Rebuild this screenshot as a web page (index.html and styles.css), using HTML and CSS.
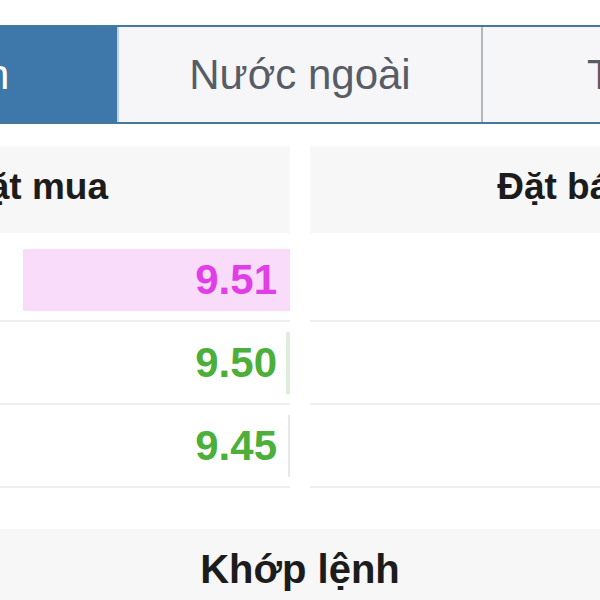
FILE: index.html
```html
<!DOCTYPE html>
<html lang="vi">
<head>
<meta charset="utf-8">
<title>Sổ lệnh</title>
<link rel="stylesheet" href="styles.css">
</head>
<body>
<div class="page">
  <nav class="tabs">
    <div class="tab active">Cá nhân</div>
    <div class="tab">Nước ngoài</div>
    <div class="tab">Tổ chức</div>
  </nav>
  <section class="book">
    <div class="col">
      <div class="head">Đặt mua</div>
      <div class="row"><div class="cell up-max"><span class="bar bar-pink" style="width:267px"></span><span class="num">9.51</span></div></div>
      <div class="row"><div class="cell up"><span class="bar bar-green" style="width:4px"></span><span class="num">9.50</span></div></div>
      <div class="row"><div class="cell up"><span class="bar bar-grey" style="width:2px"></span><span class="num">9.45</span></div></div>
    </div>
    <div class="col">
      <div class="head">Đặt bán</div>
      <div class="row"><div class="cell"></div></div>
      <div class="row"><div class="cell"></div></div>
      <div class="row"><div class="cell"></div></div>
    </div>
  </section>
  <div class="match-head">Khớp lệnh</div>
</div>
</body>
</html>
```
FILE: styles.css
```css
html, body {
  margin: 0;
  padding: 0;
  background: #ffffff;
  overflow: hidden;
}
body {
  font-family: "Liberation Sans", Arial, Helvetica, sans-serif;
  width: 600px;
  height: 600px;
}
.page {
  padding-top: 25px;
}
.tabs {
  display: flex;
  width: 1090px;
  margin-left: -245px;
  height: 95px;
  border-top: 2px solid #44799f;
  border-bottom: 2px solid #44799f;
}
.tab {
  flex: 0 0 362px;
  display: flex;
  align-items: center;
  justify-content: center;
  font-size: 42px;
  color: #575c66;
  background: #f6f6f8;
}
.tab + .tab {
  border-left: 2px solid #b4b7bc;
}
.tab.active {
  background: #3e77a9;
  color: #ffffff;
  box-sizing: border-box;
  padding-right: 12px;
}
.tab.active + .tab {
  border-left-color: #c3d2e0;
}
.book {
  display: grid;
  grid-template-columns: 510px 510px;
  column-gap: 20px;
  width: 1040px;
  margin-left: -220px;
  margin-top: 22px;
}
.head, .match-head {
  box-sizing: border-box;
  height: 87px;
  padding-top: 16px;
  background: #f7f7f7;
  text-align: center;
  font-size: 40px;
  line-height: 48px;
  font-weight: bold;
  color: #1c1c1c;
}
.head {
  margin-bottom: 6px;
  font-size: 37px;
  padding-top: 17px;
}
.row {
  padding: 10px 0 9px;
  border-bottom: 2px solid #efefef;
}
.cell {
  position: relative;
  height: 62px;
  display: flex;
  align-items: center;
  justify-content: flex-end;
  padding-right: 13px;
  font-size: 42px;
  font-weight: bold;
}
.bar {
  position: absolute;
  top: 0;
  right: 0;
  bottom: 0;
}
.bar-pink { background: #f8dcfa; }
.bar-green { background: #dcefd8; }
.bar-grey { background: #e8e8e8; }
.num {
  position: relative;
}
.up-max { color: #e03fe6; }
.up { color: #4caf3a; }
.match-head {
  width: 1040px;
  margin-left: -220px;
  margin-top: 41px;
}
```
